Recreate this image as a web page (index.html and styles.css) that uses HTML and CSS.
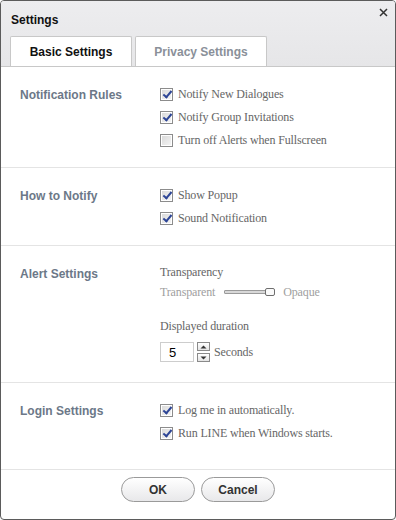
FILE: index.html
```html
<!DOCTYPE html>
<html lang="en">
<head>
  <meta charset="UTF-8">
  <title>Settings</title>
  <link rel="stylesheet" href="styles.css">
</head>
<body>
  <div class="window">
    <div class="header">
      <div class="titlebar">
        <div class="title">Settings</div>
        <div class="close">
          <svg width="9" height="9" viewBox="0 0 9 9"><path d="M1 1L8 8M8 1L1 8" stroke="#333" stroke-width="1.5" fill="none"/></svg>
        </div>
      </div>
      <div class="tabs">
        <div class="tab active">Basic Settings</div>
        <div class="tab">Privacy Settings</div>
      </div>
    </div>

    <div class="content">
      <div class="section">
        <div class="label">Notification Rules</div>
        <div class="items">
          <div class="row"><span class="cb on"></span>Notify New Dialogues</div>
          <div class="row"><span class="cb on"></span>Notify Group Invitations</div>
          <div class="row"><span class="cb"></span>Turn off Alerts when Fullscreen</div>
        </div>
      </div>

      <div class="section">
        <div class="label">How to Notify</div>
        <div class="items">
          <div class="row"><span class="cb on"></span>Show Popup</div>
          <div class="row"><span class="cb on"></span>Sound Notification</div>
        </div>
      </div>

      <div class="section alert">
        <div class="label">Alert Settings</div>
        <div class="items">
          <div class="line">Transparency</div>
          <div class="line slider-row">
            <span class="muted">Transparent</span>
            <span class="slider"><span class="track"></span><span class="thumb"></span></span>
            <span class="muted">Opaque</span>
          </div>
          <div class="line gap">Displayed duration</div>
          <div class="spin-row">
            <div class="num">5</div>
            <div class="spin">
              <div class="arrow"><svg width="7" height="4" viewBox="0 0 7 4"><path d="M0.5 3.5L3.5 0.5L6.5 3.5Z" fill="#333"/></svg></div>
              <div class="arrow"><svg width="7" height="4" viewBox="0 0 7 4"><path d="M0.5 0.5L3.5 3.5L6.5 0.5Z" fill="#333"/></svg></div>
            </div>
            <span>Seconds</span>
          </div>
        </div>
      </div>

      <div class="section login">
        <div class="label">Login Settings</div>
        <div class="items">
          <div class="row"><span class="cb on"></span>Log me in automatically.</div>
          <div class="row"><span class="cb on"></span>Run LINE when Windows starts.</div>
        </div>
      </div>
    </div>

    <div class="footer">
      <button class="btn">OK</button>
      <button class="btn">Cancel</button>
    </div>
  </div>
</body>
</html>
```

FILE: styles.css
```css
body { margin: 0; background: #fff; }
.window { width: 396px; height: 520px; box-sizing: border-box; border: 1px solid #5b5b5b; border-radius: 4px; overflow: hidden; display: flex; flex-direction: column; background: #fff; font-family: "Liberation Sans", Arial, sans-serif; }

.header { background: linear-gradient(#ededef, #e6e6e8); }
.titlebar { height: 35px; display: flex; justify-content: space-between; padding: 0 7px 0 10px; }
.title { font-weight: bold; font-size: 12px; color: #111; line-height: 38px; }
.close { margin-top: 7px; width: 9px; height: 9px; }
.close svg { display: block; }

.tabs { display: flex; gap: 3px; margin-left: 9px; height: 30px; }
.tab { box-sizing: border-box; height: 30px; border: 1px solid #c8c8c8; border-bottom: none; border-radius: 2px 2px 0 0; background: #fff; font-weight: bold; font-size: 12px; color: #8a9099; display: flex; align-items: center; justify-content: center; width: 132px; padding-top: 1px; }
.tab.active { width: 122px; color: #111; }

.content { flex: 1; border-top: 1px solid #c8c8c8; }
.section { display: flex; border-bottom: 1px solid #e4e4e4; padding: 16px 0 15px 19px; }
.section.alert { padding-bottom: 20px; }
.section.login { padding-bottom: 24px; }
.label { width: 140px; font-weight: bold; font-size: 12px; color: #6c7888; line-height: 24px; }
.items { font-family: "Liberation Serif", "Times New Roman", serif; font-size: 12px; letter-spacing: -0.15px; color: #666; }

.row { height: 23px; display: flex; align-items: center; }
.cb { width: 11px; height: 11px; border: 1px solid #8c8c8c; background: linear-gradient(135deg, #d8d8d8, #f6f6f6); margin-right: 5px; box-shadow: inset 0 0 0 1px #fff; position: relative; flex: none; }
.cb.on::after { content: ""; position: absolute; left: 4px; top: 0px; width: 3px; height: 7px; border: solid #2d4596; border-width: 0 2px 2px 0; transform: rotate(40deg); }

.line { height: 20px; display: flex; align-items: center; }
.line.gap { margin-top: 14px; }
.muted { color: #a0a0a0; }
.slider { display: inline-flex; align-items: center; margin: 0 8px 0 9px; }
.track { width: 40px; height: 2px; border: 1px solid #9a9a9a; background: #d8d8d8; border-radius: 1px; }
.thumb { width: 8px; height: 6px; border: 1px solid #6e6e6e; border-radius: 2px; background: #fafafa; margin-left: -1px; }

.spin-row { display: flex; align-items: center; margin-top: 6px; height: 20px; }
.num { box-sizing: border-box; width: 34px; height: 20px; border: 1px solid #cdcdcd; font-family: "Liberation Sans", Arial, sans-serif; font-size: 13px; color: #000; padding-left: 8px; line-height: 19px; }
.spin { display: flex; flex-direction: column; gap: 2px; margin: 0 4px 0 3px; }
.arrow { box-sizing: border-box; width: 13px; height: 9px; border: 1px solid #8a8a8a; background: linear-gradient(#fff, #e4e4e4); display: flex; align-items: center; justify-content: center; }
.arrow svg { display: block; }

.footer { height: 48px; display: flex; justify-content: center; align-items: flex-start; gap: 6px; padding-top: 6px; box-sizing: border-box; }
.btn { width: 74px; height: 25px; border: 1px solid #9a9a9a; border-radius: 13px; background: linear-gradient(#ffffff, #e8e8ea); font-family: "Liberation Sans", Arial, sans-serif; font-weight: bold; font-size: 12px; color: #333; padding: 0; }
```
